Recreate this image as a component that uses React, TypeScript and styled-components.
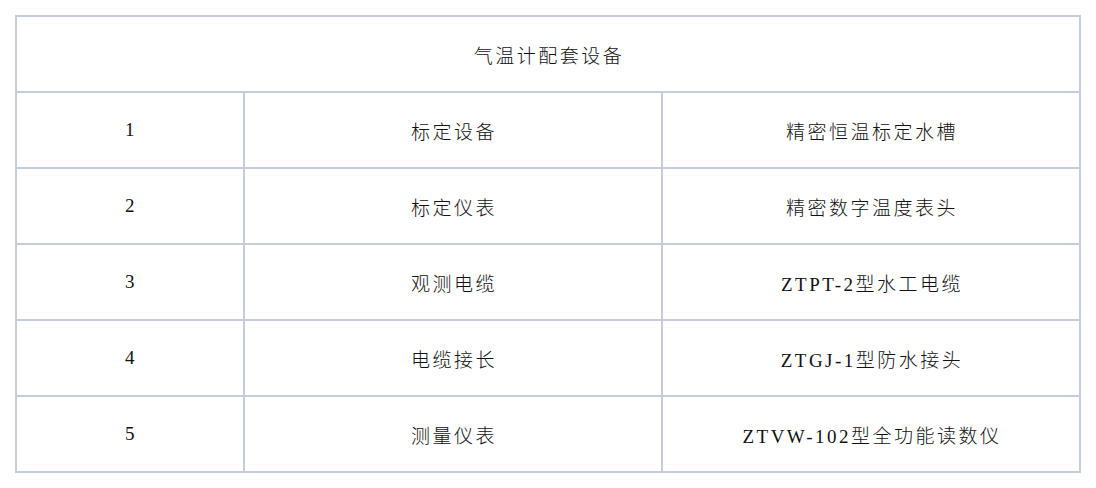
import React from "react";
import styled, { createGlobalStyle } from "styled-components";

const GlobalStyle = createGlobalStyle`
  body {
    margin: 0;
    background: #ffffff;
  }
`;

// 气温计配套设备 목록
const rows = [
  { no: "1", name: "标定设备", model: "精密恒温标定水槽" },
  { no: "2", name: "标定仪表", model: "精密数字温度表头" },
  { no: "3", name: "观测电缆", model: "ZTPT-2型水工电缆" },
  { no: "4", name: "电缆接长", model: "ZTGJ-1型防水接头" },
  { no: "5", name: "测量仪表", model: "ZTVW-102型全功能读数仪" },
];

function App() {
  return (
    <>
      <GlobalStyle />
      <Page>
        <TableGrid>
          <TitleCell>气温计配套设备</TitleCell>
          {rows.map((r) => (
            <React.Fragment key={r.no}>
              <Cell>{r.no}</Cell>
              <Cell>{r.name}</Cell>
              <Cell>{r.model}</Cell>
            </React.Fragment>
          ))}
        </TableGrid>
      </Page>
    </>
  );
}

export default App;

const Page = styled.div`
  padding: 15px;
  width: 1096px;
  height: 488px;
  box-sizing: border-box;
`;

const TableGrid = styled.div`
  display: grid;
  grid-template-columns: 228px 418px 418px;
  grid-auto-rows: 76px;
  width: 1066px;
  box-sizing: border-box;
  border-top: 2px solid #c6ccdc;
  border-left: 2px solid #c6ccdc;
`;

const Cell = styled.div`
  display: flex;
  align-items: center;
  justify-content: center;
  box-sizing: border-box;
  padding-left: 2px;
  border-right: 2px solid #c6ccdc;
  border-bottom: 2px solid #c6ccdc;
  font-family: "Liberation Serif", "Noto Sans CJK SC", serif;
  font-size: 19px;
  font-weight: 300;
  letter-spacing: 2.5px;
  color: #111111;
`;

const TitleCell = styled(Cell)`
  grid-column: 1 / 4;
`;
